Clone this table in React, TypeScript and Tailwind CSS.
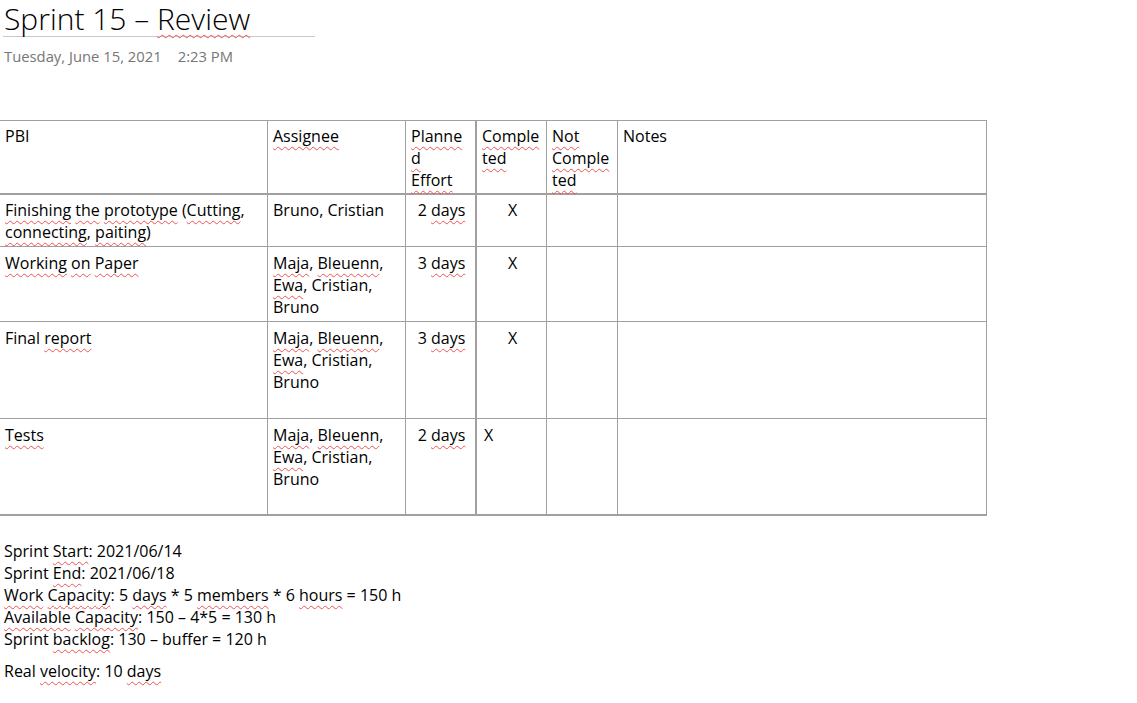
import React from "react";

// red squiggle under words flagged by the proofing tool
function S({ children }: { children: React.ReactNode }) {
  return (
    <span className="underline decoration-wavy decoration-[#f05252] decoration-1 underline-offset-[4px] [text-decoration-skip-ink:none]">
      {children}
    </span>
  );
}

function Cell({
  children,
  className = "",
}: {
  children?: React.ReactNode;
  className?: string;
}) {
  return (
    <div className={"border-[#a0a0a0] pl-[5px] pr-[3px] " + className}>
      {children}
    </div>
  );
}

export default function App() {
  return (
    <div className="min-h-screen bg-white text-black font-['Open_Sans',sans-serif] text-[16px] leading-[22px]">
      <div className="ml-[3px] w-[312px] border-b border-[#c8c8c8] pl-[1px] pt-[2px]">
        <h1 className="text-[30px] leading-[34px] font-light">
          Sprint 15 – <S>Review</S>
        </h1>
      </div>
      <div className="mt-[9px] pl-[4px] text-[14.8px] leading-[20px] text-[#767676] flex gap-[16px]">
        <span>Tuesday, June 15, 2021</span>
        <span>2:23 PM</span>
      </div>

      <div className="mt-[54px] w-[987px] border-t border-[#a0a0a0] grid grid-cols-[268px_138px_71px_70px_71px_369px] grid-rows-[74px_52px_75px_97px_97px]">
        {/* header */}
        <Cell className="border-r border-b-2 pt-[4px]">PBI</Cell>
        <Cell className="border-r border-b-2 pt-[4px]">
          <S>Assignee</S>
        </Cell>
        <Cell className="border-r-2 border-b-2 pt-[4px]">
          <S>Planne</S>
          <br />
          <S>d</S>
          <br />
          <S>Effort</S>
        </Cell>
        <Cell className="border-r border-b-2 pt-[4px]">
          <S>Comple</S>
          <br />
          <S>ted</S>
        </Cell>
        <Cell className="border-r border-b-2 pt-[4px]">
          <S>Not</S>
          <br />
          <S>Comple</S>
          <br />
          <S>ted</S>
        </Cell>
        <Cell className="border-r border-b-2 pt-[4px]">Notes</Cell>

        {/* row 1 */}
        <Cell className="border-r border-b pt-[4px]">
          <S>Finishing</S> <S>the</S> <S>prototype</S> (<S>Cutting</S>,
          <br />
          <S>connecting</S>, <S>paiting</S>)
        </Cell>
        <Cell className="border-r border-b pt-[4px]">Bruno, Cristian</Cell>
        <Cell className="border-r-2 border-b pt-[4px] text-center">
          2 <S>days</S>
        </Cell>
        <Cell className="border-r border-b pt-[4px] text-center">X</Cell>
        <Cell className="border-r border-b" />
        <Cell className="border-r border-b" />

        {/* row 2 */}
        <Cell className="border-r border-b pt-[5px]">
          <S>Working</S> <S>on</S> <S>Paper</S>
        </Cell>
        <Cell className="border-r border-b pt-[5px]">
          <S>Maja</S>, <S>Bleuenn</S>,
          <br />
          <S>Ewa</S>, Cristian,
          <br />
          Bruno
        </Cell>
        <Cell className="border-r-2 border-b pt-[5px] text-center">
          3 <S>days</S>
        </Cell>
        <Cell className="border-r border-b pt-[5px] text-center">X</Cell>
        <Cell className="border-r border-b" />
        <Cell className="border-r border-b" />

        {/* row 3 */}
        <Cell className="border-r border-b pt-[5px]">
          Final <S>report</S>
        </Cell>
        <Cell className="border-r border-b pt-[5px]">
          <S>Maja</S>, <S>Bleuenn</S>,
          <br />
          <S>Ewa</S>, Cristian,
          <br />
          Bruno
        </Cell>
        <Cell className="border-r-2 border-b pt-[5px] text-center">
          3 <S>days</S>
        </Cell>
        <Cell className="border-r border-b pt-[5px] text-center">X</Cell>
        <Cell className="border-r border-b" />
        <Cell className="border-r border-b" />

        {/* row 4 */}
        <Cell className="border-r border-b-2 pt-[5px]">
          <S>Tests</S>
        </Cell>
        <Cell className="border-r border-b-2 pt-[5px]">
          <S>Maja</S>, <S>Bleuenn</S>,
          <br />
          <S>Ewa</S>, Cristian,
          <br />
          Bruno
        </Cell>
        <Cell className="border-r-2 border-b-2 pt-[5px] text-center">
          2 <S>days</S>
        </Cell>
        <Cell className="border-r border-b-2 pt-[5px] pl-[7px]">X</Cell>
        <Cell className="border-r border-b-2" />
        <Cell className="border-r border-b-2" />
      </div>

      <div className="mt-[24px] pl-[4px]">
        <p>
          Sprint <S>Start</S>: 2021/06/14
        </p>
        <p>
          Sprint <S>End</S>: 2021/06/18
        </p>
        <p>
          <S>Work</S> <S>Capacity</S>: 5 <S>days</S> * 5 <S>members</S> * 6{" "}
          <S>hours</S> = 150 h
        </p>
        <p>
          <S>Available</S> <S>Capacity</S>: 150 – 4*5 = 130 h
        </p>
        <p>
          Sprint <S>backlog</S>: 130 – buffer = 120 h
        </p>
        <p className="mt-[10px]">
          Real <S>velocity</S>: 10 <S>days</S>
        </p>
      </div>
    </div>
  );
}
